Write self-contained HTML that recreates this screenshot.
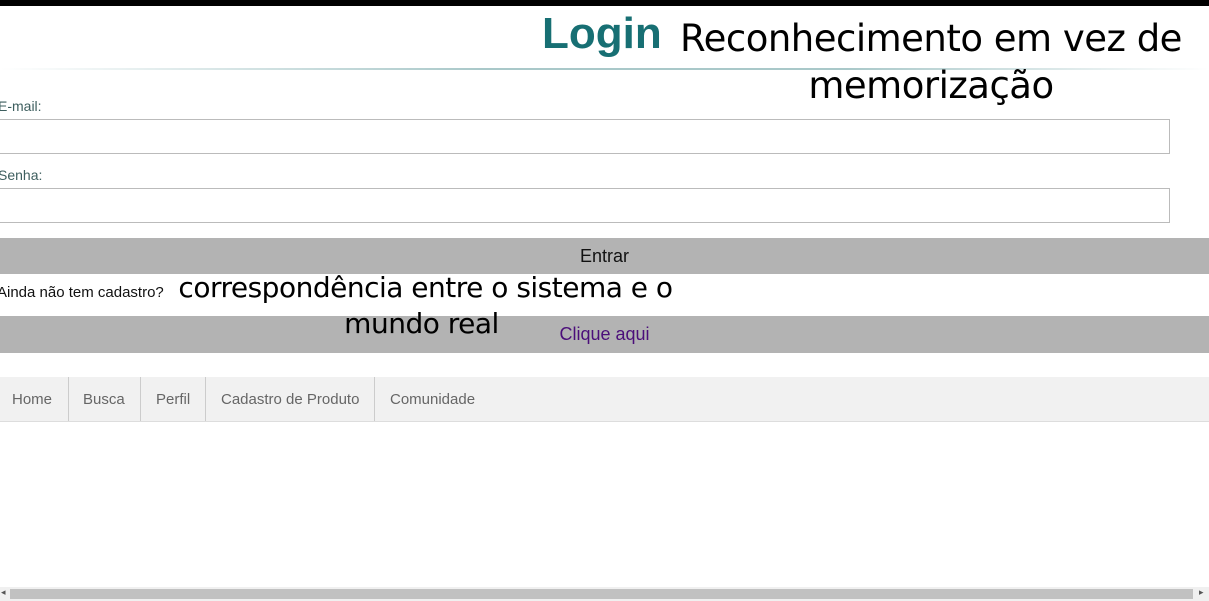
<!DOCTYPE html>
<html><head><meta charset="utf-8"><style>
body{margin:0;width:1209px;height:601px;overflow:hidden;background:#fff;font-family:"Liberation Sans",sans-serif;position:relative}
.a{position:absolute}
</style></head><body>
<div class="a" style="left:0;top:0;width:1209px;height:6px;background:#000"></div>
<div class="a" style="left:542px;top:9px;font-size:44px;font-weight:bold;color:#176f73">Login</div>
<div class="a" style="left:0;top:68px;width:1209px;height:2px;background:linear-gradient(90deg,#fff,#a9c8c9 40%,#a9c8c9 70%,#fff)"></div>
<div class="a" style="left:656px;top:15px;width:550px;text-align:center;font-family:'DejaVu Sans',sans-serif;font-size:37px;line-height:47px;color:#000;letter-spacing:-0.5px">Reconhecimento em vez de<br>memorização</div>
<div class="a" style="left:-2px;top:98px;font-size:14px;color:#3d5e5e">E-mail:</div>
<div class="a" style="left:-2px;top:119px;width:1170px;height:33px;border:1px solid #bbb"></div>
<div class="a" style="left:-2px;top:167px;font-size:14px;color:#3d5e5e">Senha:</div>
<div class="a" style="left:-2px;top:188px;width:1170px;height:33px;border:1px solid #bbb"></div>
<div class="a" style="left:0;top:238px;width:1209px;height:36px;background:#b3b3b3;text-align:center;line-height:36px;font-size:18px;color:#111">Entrar</div>
<div class="a" style="left:-3px;top:284px;font-size:15px;color:#111">Ainda não tem cadastro?</div>
<div class="a" style="left:0;top:316px;width:1209px;height:37px;background:#b3b3b3;text-align:center;line-height:37px;font-size:18px;color:#4b0e7a">Clique aqui</div>
<div class="a" style="left:158px;top:270px;width:535px;text-align:center;font-family:'DejaVu Sans',sans-serif;font-size:28px;line-height:36px;color:#000;letter-spacing:-0.5px">correspondência entre o sistema e o<br><span style="position:relative;left:-4px">mundo real</span></div>
<div class="a" style="left:0;top:377px;width:1209px;height:44px;background:#f1f1f1;border-bottom:1px solid #ddd;font-size:15px;color:#666;line-height:46px">
<span class="a" style="left:12px">Home</span>
<span class="a" style="left:68px;top:0;width:1px;height:44px;background:#ccc"></span>
<span class="a" style="left:83px">Busca</span>
<span class="a" style="left:140px;top:0;width:1px;height:44px;background:#ccc"></span>
<span class="a" style="left:156px">Perfil</span>
<span class="a" style="left:205px;top:0;width:1px;height:44px;background:#ccc"></span>
<span class="a" style="left:221px">Cadastro de Produto</span>
<span class="a" style="left:374px;top:0;width:1px;height:44px;background:#ccc"></span>
<span class="a" style="left:390px">Comunidade</span>
</div>
<div class="a" style="left:0;top:587px;width:1209px;height:14px;background:#f0f0f0"></div>
<div class="a" style="left:10px;top:589px;width:1183px;height:10px;background:#c1c1c1"></div>
<div class="a" style="left:1px;top:587px;font-size:9px;color:#555">◂</div>
<div class="a" style="left:1199px;top:587px;font-size:9px;color:#555">▸</div>
</body></html>
